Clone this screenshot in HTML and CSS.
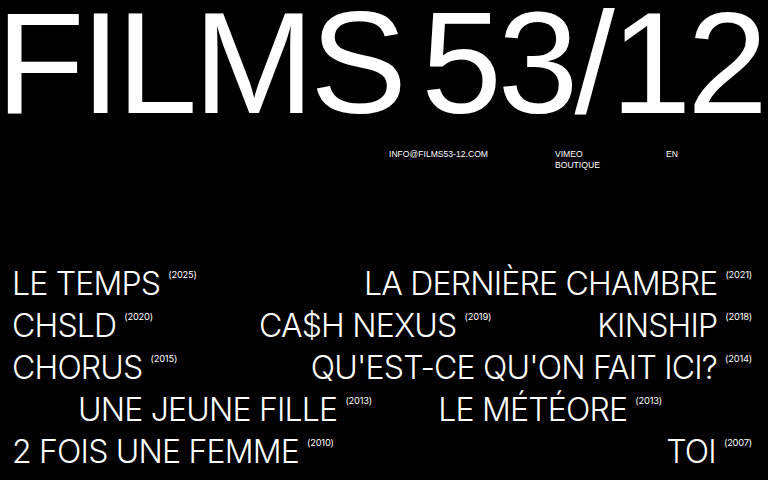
FILE: index.html
```html
<!DOCTYPE html>
<html lang="fr">
<head>
<meta charset="utf-8">
<title>FILMS53/12</title>
<link rel="stylesheet" href="styles.css">
</head>
<body>
<div class="page">
  <header class="title">
    <span class="word">FILMS</span>
    <span class="word">53/12</span>
  </header>
  <nav class="nav">
    <div class="col col-mail"><a href="#">INFO@FILMS53-12.COM</a></div>
    <div class="col col-links"><a href="#">VIMEO</a><a href="#">BOUTIQUE</a></div>
    <div class="col col-lang"><a href="#">EN</a></div>
  </nav>
  <main class="films">
    <div class="row">
      <a class="film" href="#"><span class="name">LE TEMPS</span><span class="year">(2025)</span></a>
      <a class="film" href="#"><span class="name">LA DERNIÈRE CHAMBRE</span><span class="year">(2021)</span></a>
    </div>
    <div class="row">
      <a class="film" href="#"><span class="name">CHSLD</span><span class="year">(2020)</span></a>
      <a class="film" href="#"><span class="name">CA$H NEXUS</span><span class="year">(2019)</span></a>
      <a class="film" href="#"><span class="name">KINSHIP</span><span class="year">(2018)</span></a>
    </div>
    <div class="row">
      <a class="film" href="#"><span class="name">CHORUS</span><span class="year">(2015)</span></a>
      <a class="film" href="#"><span class="name">QU'EST-CE QU'ON FAIT ICI?</span><span class="year">(2014)</span></a>
    </div>
    <div class="row row-inset">
      <a class="film" href="#"><span class="name">UNE JEUNE FILLE</span><span class="year">(2013)</span></a>
      <a class="film" href="#"><span class="name">LE MÉTÉORE</span><span class="year">(2013)</span></a>
    </div>
    <div class="row">
      <a class="film" href="#"><span class="name">2 FOIS UNE FEMME</span><span class="year">(2010)</span></a>
      <a class="film" href="#"><span class="name">TOI</span><span class="year">(2007)</span></a>
    </div>
  </main>
</div>
</body>
</html>
```
FILE: styles.css
```css
* { box-sizing: border-box; }
html, body {
  margin: 0;
  padding: 0;
  background: #000;
  color: #fff;
}
a { color: inherit; text-decoration: none; }
.page {
  display: flex;
  flex-direction: column;
  height: 480px;
  overflow: hidden;
}
.title {
  display: flex;
  justify-content: space-between;
  margin: 0 4px 0 -4px;
  padding-top: 1px;
  font-family: "Liberation Sans", Arial, sans-serif;
  font-size: 145px;
  line-height: 0.86;
  letter-spacing: -4px;
  font-weight: 400;
}
.nav {
  display: flex;
  padding-left: 389px;
  margin-top: 23px;
  font-family: "Liberation Sans", Arial, sans-serif;
  font-size: 8.6px;
  line-height: 11.5px;
}
.col-mail { width: 166px; }
.col-links { width: 111px; display: flex; flex-direction: column; }
.films {
  margin-top: auto;
  padding: 0 16px 7px 12px;
  font-family: Inter, "Liberation Sans", sans-serif;
  font-weight: 300;
}
.row {
  display: flex;
  justify-content: space-between;
}
.row-inset { padding: 0 90px 0 66px; }
.film {
  display: inline-flex;
  align-items: flex-start;
}
.name {
  font-size: 32px;
  line-height: 42px;
  letter-spacing: -0.8px;
}
.year {
  font-size: 9.3px;
  line-height: 10px;
  margin-left: 8px;
  margin-top: 7px;
  font-weight: 400;
  letter-spacing: -0.2px;
}
```
